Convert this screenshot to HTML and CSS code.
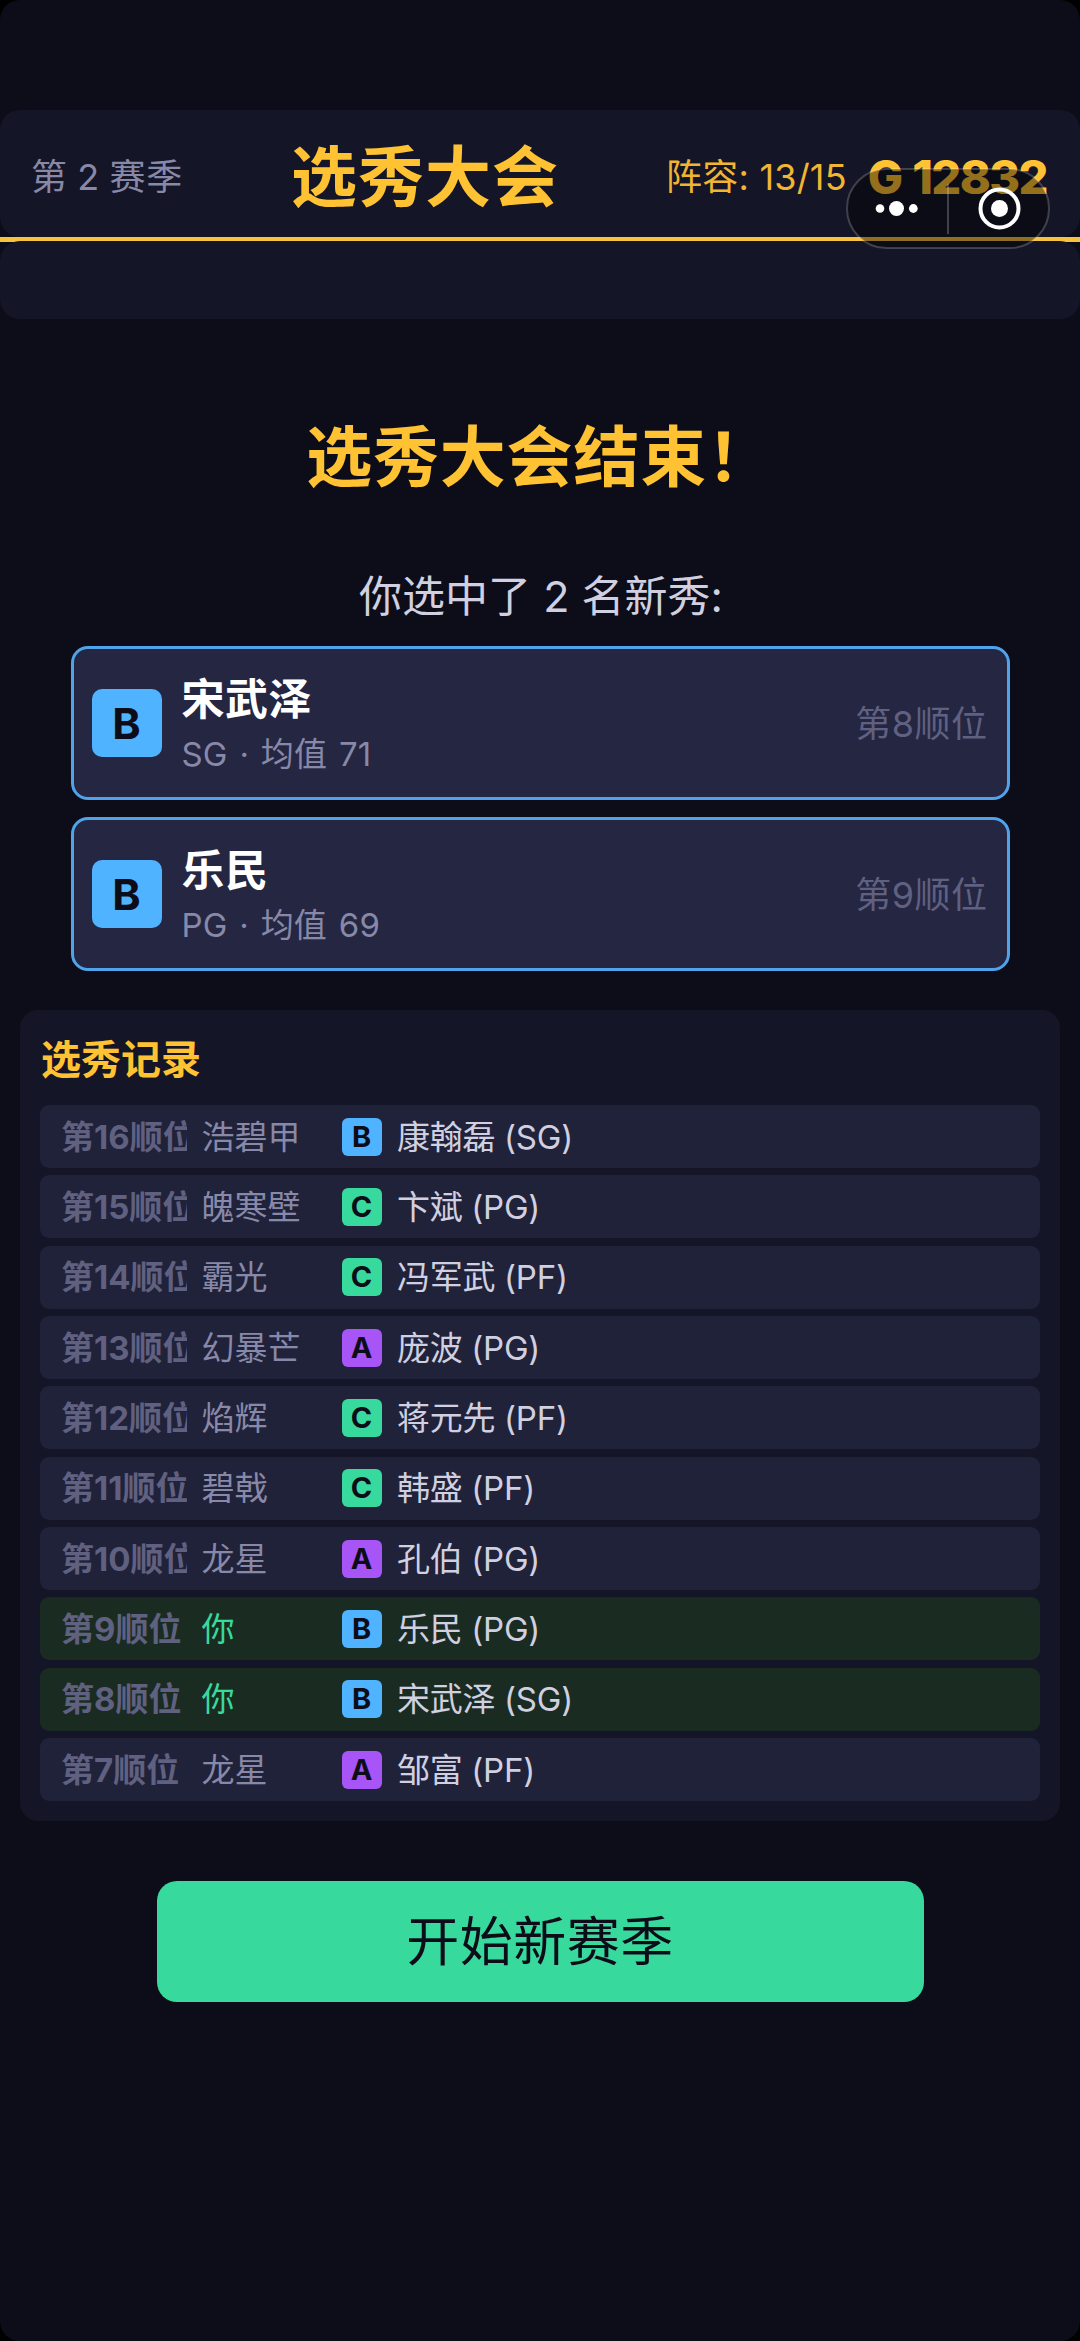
FILE: index.html
```html
<!DOCTYPE html>
<html lang="zh-CN">
<head>
<meta charset="utf-8">
<title>选秀大会</title>
<link rel="stylesheet" href="styles.css">
</head>
<body>
<div class="screen">
  <header class="topbar">
    <div class="season">第 2 赛季</div>
    <h1 class="title">选秀大会</h1>
    <div class="stats"><span class="roster">阵容: <span class="count">13/15</span></span><span class="gold">G 12832</span></div>
  </header>
  <div class="substrip"><div class="substrip-fill"></div></div>

  <main class="content">
    <h2 class="finish">选秀大会结束！</h2>
    <p class="summary">你选中了 2 名新秀:</p>
    <section class="picks">
      <article class="pick">
        <span class="grade b">B</span>
        <div class="info"><div class="name">宋武泽</div><div class="meta">SG · 均值 71</div></div>
        <div class="order">第8顺位</div>
      </article>
      <article class="pick">
        <span class="grade b">B</span>
        <div class="info"><div class="name">乐民</div><div class="meta">PG · 均值 69</div></div>
        <div class="order">第9顺位</div>
      </article>
    </section>

    <section class="log">
      <h3 class="log-title">选秀记录</h3>
      <div class="rows">
        <div class="row"><span class="rank">第16顺位</span><span class="team">浩碧甲</span><span class="tag b">B</span><span class="player">康翰磊 (SG)</span></div>
        <div class="row"><span class="rank">第15顺位</span><span class="team">魄寒壁</span><span class="tag c">C</span><span class="player">卞斌 (PG)</span></div>
        <div class="row"><span class="rank">第14顺位</span><span class="team">霸光</span><span class="tag c">C</span><span class="player">冯军武 (PF)</span></div>
        <div class="row"><span class="rank">第13顺位</span><span class="team">幻暴芒</span><span class="tag a">A</span><span class="player">庞波 (PG)</span></div>
        <div class="row"><span class="rank">第12顺位</span><span class="team">焰辉</span><span class="tag c">C</span><span class="player">蒋元先 (PF)</span></div>
        <div class="row"><span class="rank">第11顺位</span><span class="team">碧戟</span><span class="tag c">C</span><span class="player">韩盛 (PF)</span></div>
        <div class="row"><span class="rank">第10顺位</span><span class="team">龙星</span><span class="tag a">A</span><span class="player">孔伯 (PG)</span></div>
        <div class="row mine"><span class="rank">第9顺位</span><span class="team">你</span><span class="tag b">B</span><span class="player">乐民 (PG)</span></div>
        <div class="row mine"><span class="rank">第8顺位</span><span class="team">你</span><span class="tag b">B</span><span class="player">宋武泽 (SG)</span></div>
        <div class="row"><span class="rank">第7顺位</span><span class="team">龙星</span><span class="tag a">A</span><span class="player">邹富 (PF)</span></div>
      </div>
    </section>

    <button class="start" type="button">开始新赛季</button>
  </main>

  <div class="capsule">
    <svg width="204" height="81" viewBox="0 0 204 81">
      <rect x="1" y="1" width="202" height="79" rx="39.5" fill="#000" fill-opacity=".42" stroke="#fff" stroke-opacity=".2" stroke-width="2"/>
      <path d="M102 16v50" stroke="#fff" stroke-opacity=".22" stroke-width="2"/>
      <g fill="#fff"><circle cx="34" cy="40.5" r="4.3"/><circle cx="50.5" cy="40.5" r="7.5"/><circle cx="67.3" cy="40.5" r="4.4"/><circle cx="153.5" cy="40.5" r="8.5"/></g>
      <circle cx="153.5" cy="40.5" r="19" fill="none" stroke="#fff" stroke-width="4"/>
    </svg>
  </div>
</div>
</body>
</html>
```
FILE: styles.css
```css
* { box-sizing: border-box; }
body {
  margin: 0;
  background: #000;
  font-family: Inter, "Noto Sans CJK SC", sans-serif;
  color: #d0d0e0;
}
h1, h2, h3, p { margin: 0; }

.screen {
  position: relative;
  width: 1080px;
  height: 2341px;
  padding-top: 110px;
  background: #0d0d1a;
  border-radius: 20px;
  overflow: hidden;
}

.topbar {
  display: flex;
  align-items: center;
  height: 127px;
  padding: 6px 31px 0;
  background: #141526;
  border-radius: 20px;
  line-height: 60px;
  white-space: nowrap;
}
.season {
  width: 260px;
  font-size: 36px;
  letter-spacing: .8px;
  word-spacing: -1.5px;
  color: #8888a8;
}
.title {
  font-size: 66px;
  font-weight: 700;
  letter-spacing: 1px;
  color: #ffc233;
}
.stats {
  flex: 1;
  display: flex;
  justify-content: flex-end;
  align-items: center;
  gap: 21px;
  color: #ffc233;
}
.roster { font-size: 36px; letter-spacing: .2px; color: #f0b632; }
.gold { font-size: 47px; font-weight: 800; letter-spacing: -1.6px; word-spacing: 2px; margin-right: 2px; }

.substrip { height: 82px; background: linear-gradient(#f7c23c 5px, transparent 5px); padding-top: 4px; }
.substrip-fill { height: 78px; border-radius: 20px; background: #141526; }

.content {
  display: flex;
  flex-direction: column;
  align-items: center;
}
.finish {
  margin-top: 88px;
  font-size: 66px;
  line-height: 100px;
  letter-spacing: .8px;
  color: #ffc233;
}
.summary {
  margin-top: 59px;
  padding-left: 2px;
  font-size: 43px;
  line-height: 60px;
}
.picks {
  display: flex;
  flex-direction: column;
  gap: 17px;
  width: 939px;
  margin-top: 20px;
}
.pick {
  display: flex;
  align-items: center;
  height: 154px;
  padding: 0 19px 0 18px;
  border: 3px solid #4fa3ea;
  border-radius: 17px;
  background: #242642;
}
.grade, .tag {
  display: flex;
  justify-content: center;
  align-items: center;
  color: #0d0d1a;
  font-weight: 700;
}
.grade { width: 70px; height: 68px; border-radius: 10px; font-size: 43px; }
.b { background: #4fb3ff; }
.c { background: #38d99c; }
.a { background: #a855f7; }
.info { flex: 1; margin-left: 20px; padding-top: 5px; }
.name { font-size: 43px; font-weight: 700; line-height: 56px; letter-spacing: .5px; color: #fff; }
.meta { font-size: 33px; line-height: 54px; letter-spacing: .1px; word-spacing: 2.5px; color: #8888a8; }
.order { padding-bottom: 4px; font-size: 36px; letter-spacing: .5px; color: #606080; }

.log {
  width: 1040px;
  height: 811px;
  margin-top: 39px;
  padding: 20px;
  border-radius: 18px;
  background: #141526;
}
.log-title {
  height: 75px;
  padding: 2px 0 0 1px;
  font-size: 40px;
  line-height: 56px;
  color: #ffc233;
}
.rows { display: flex; flex-direction: column; gap: 7.35px; }
.row {
  display: flex;
  align-items: center;
  height: 63px;
  padding-left: 21px;
  border-radius: 9px;
  background: #20223a;
  font-size: 33px;
  line-height: 50px;
  white-space: nowrap;
}
.rank { width: 125.5px; overflow: hidden; font-weight: 700; color: #606080; }
.team { width: 140px; margin-left: 15px; color: #8888a8; }
.tag { width: 40px; height: 38px; border-radius: 6px; font-size: 29px; }
.player { margin-left: 15.5px; letter-spacing: -.2px; word-spacing: -.5px; }
.mine { background: #1a2c22; }
.mine .team { color: #38d99c; }

.start {
  width: 767px;
  height: 121px;
  margin-top: 60px;
  padding: 0 0 8px;
  border: 0;
  border-radius: 20px;
  background: #38d99c;
  color: #0d0d1a;
  font: 400 53px/80px "Noto Sans CJK SC", sans-serif;
  letter-spacing: .5px;
}

.capsule { position: absolute; left: 846px; top: 168px; }
.capsule svg { display: block; }
```
